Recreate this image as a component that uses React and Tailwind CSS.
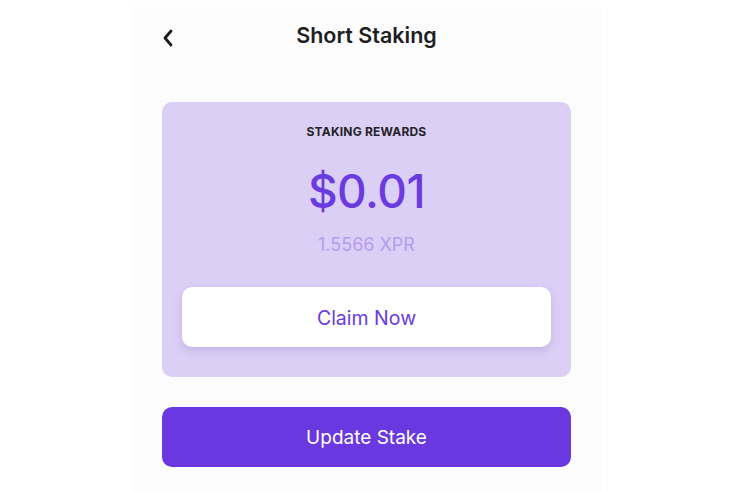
export default function App() {
  return (
    <div className="w-[733px] h-[491px] bg-white flex justify-center pt-[7px]" style={{ fontFamily: "Inter, 'Noto Sans', sans-serif" }}>
      <div className="w-[469px] h-[484px] bg-[#fcfcfd] flex flex-col px-[30px]">
        <div className="relative h-[58px] flex items-center justify-center">
          <svg className="absolute left-[0px] top-[22px]" width="12" height="18" viewBox="0 0 12 18" fill="none">
            <path d="M9 2 L3 9 L9 16" stroke="#1c1c1e" strokeWidth="2.8" strokeLinecap="round" strokeLinejoin="round" />
          </svg>
          <h1 className="text-[21.5px] font-semibold text-[#1f1f22] tracking-[0px] mt-[-1px]">Short Staking</h1>
        </div>
        <div className="mt-[37px] h-[275px] rounded-[10px] bg-[#dccff6] flex flex-col items-center px-[20px]">
          <div className="mt-[21px] text-[12px] font-bold text-[#232326] tracking-[0.2px]">STAKING REWARDS</div>
          <div className="mt-[25px] text-[46px] leading-[50px] font-medium text-[#6a3be0] tracking-[-0.5px]">$0.01</div>
          <div className="mt-[15px] text-[18px] text-[#b59cf1]">1.5566 XPR</div>
          <button className="mt-[29px] w-full h-[60px] pt-[3px] rounded-[10px] bg-white text-[19.5px] text-[#6a3be0] shadow-[0_4px_10px_rgba(90,60,160,0.18)]">Claim Now</button>
        </div>
        <button className="mt-[30px] h-[60px] pt-[3px] rounded-[10px] bg-[#6938e0] text-white text-[19px]">Update Stake</button>
      </div>
    </div>
  );
}
